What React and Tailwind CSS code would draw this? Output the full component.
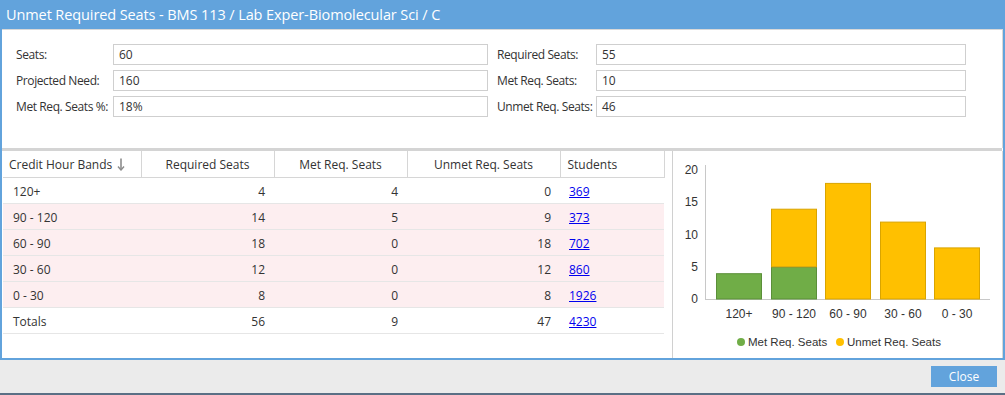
import React from 'react';

const fields = [
  [['Seats:', '60'], ['Required Seats:', '55']],
  [['Projected Need:', '160'], ['Met Req. Seats:', '10']],
  [['Met Req. Seats %:', '18%'], ['Unmet Req. Seats:', '46']],
];

const rows = [
  { band: '120+', req: 4, met: 4, unmet: 0, students: 369, warn: false },
  { band: '90 - 120', req: 14, met: 5, unmet: 9, students: 373, warn: true },
  { band: '60 - 90', req: 18, met: 0, unmet: 18, students: 702, warn: true },
  { band: '30 - 60', req: 12, met: 0, unmet: 12, students: 860, warn: true },
  { band: '0 - 30', req: 8, met: 0, unmet: 8, students: 1926, warn: true },
  { band: 'Totals', req: 56, met: 9, unmet: 47, students: 4230, warn: false },
];

// chart geometry
const base = 148;
const unit = 6.45;
const barX = [43, 98, 152, 207, 261];

function SortArrow() {
  return (
    <svg width="8" height="13" viewBox="0 0 8 13" className="inline-block ml-[5px] align-[-2px]">
      <path d="M4 0.5V11.5" stroke="#8c8c8c" strokeWidth="1.6" />
      <path d="M1 8.5L4 12L7 8.5" stroke="#8c8c8c" strokeWidth="1.4" fill="none" />
    </svg>
  );
}

function Chart() {
  const bars = rows.slice(0, 5);
  return (
    <svg width="328" height="207" className="block" style={{ fontFamily: '"Liberation Sans", Arial, sans-serif' }}>
      {[0, 5, 10, 15, 20].map(v => (
        <text key={v} x="25" y={base - v * unit + 4} fontSize="12" fill="#333" textAnchor="end">{v}</text>
      ))}
      <line x1="32.5" y1="14" x2="32.5" y2={base} stroke="#c8c8c8" />
      <line x1="32" y1={base + 0.5} x2="317" y2={base + 0.5} stroke="#c8c8c8" />
      {bars.map((r, i) => {
        const x = barX[i] + 0.5;
        const metTop = base - r.met * unit;
        const unTop = metTop - r.unmet * unit;
        return (
          <g key={r.band}>
            {r.met > 0 && (
              <rect x={x} y={metTop + 0.5} width="45" height={r.met * unit - 0.5} fill="#70ad47" stroke="#5b8f39" />
            )}
            {r.unmet > 0 && (
              <rect x={x} y={unTop + 0.5} width="45" height={r.unmet * unit - 0.5} fill="#ffc000" stroke="#d9a400" />
            )}
            <text x={barX[i] + 23} y="167" fontSize="12" fill="#333" textAnchor="middle">{r.band}</text>
          </g>
        );
      })}
      <circle cx="68" cy="191" r="4" fill="#70ad47" />
      <text x="75" y="195" fontSize="11.5" fill="#333">Met Req. Seats</text>
      <circle cx="167" cy="191" r="4" fill="#ffc000" />
      <text x="174" y="195" fontSize="11.5" fill="#333">Unmet Req. Seats</text>
    </svg>
  );
}

export default function App() {
  return (
    <div className="w-[1005px] h-[395px] bg-[#ebebeb] flex flex-col overflow-hidden text-[#333]" style={{ fontFamily: '"Open Sans", "Noto Sans", sans-serif' }}>
      {/* title */}
      <div className="h-[29px] bg-[#62a3dc] text-white text-[14.5px] leading-[29px] pl-[6px] shrink-0 tracking-[-0.1px]">
        Unmet Required Seats - BMS 113 / Lab Exper-Biomolecular Sci / C
      </div>

      {/* body */}
      <div className="h-[331px] border-x-2 border-b-2 border-[#62a3dc] bg-white flex flex-col shrink-0">
        <div className="h-[119px] border-t border-r border-[#d8d8d8] pt-[14px] pl-[14px] flex flex-col gap-[5px] text-[12px]">
          {fields.map((pair, i) => (
            <div key={i} className="flex h-[21px] items-center">
              <div className="w-[97px] whitespace-nowrap tracking-[-0.4px]">{pair[0][0]}</div>
              <div className="w-[375px] h-[21px] border border-[#cfcfcf] pl-[5px] leading-[19px]">{pair[0][1]}</div>
              <div className="w-[108px] pl-[9px] whitespace-nowrap tracking-[-0.4px]">{pair[1][0]}</div>
              <div className="w-[370px] h-[21px] border border-[#cfcfcf] pl-[5px] leading-[19px]">{pair[1][1]}</div>
            </div>
          ))}
        </div>
        <div className="h-[3px] bg-[#d4d4d4] mr-[1px]" />
        <div className="flex flex-1 text-[12px] border-r border-[#d8d8d8]">
          <div className="w-[670px] pl-[1px]">
            <table className="border-collapse table-fixed w-[661px]">
              <colgroup>
                <col className="w-[138px]" />
                <col className="w-[133px]" />
                <col className="w-[133px]" />
                <col className="w-[153px]" />
                <col className="w-[104px]" />
              </colgroup>
              <thead>
                <tr className="h-[26px]">
                  <th className="font-normal text-left pl-[6px] pt-[2px] border-r border-b border-[#d6d6d6]">
                    Credit Hour Bands<SortArrow />
                  </th>
                  <th className="font-normal text-center pt-[2px] border-r border-b border-[#d6d6d6]">Required Seats</th>
                  <th className="font-normal text-center pt-[2px] border-r border-b border-[#d6d6d6]">Met Req. Seats</th>
                  <th className="font-normal text-center pt-[2px] border-r border-b border-[#d6d6d6]">Unmet Req. Seats</th>
                  <th className="font-normal text-left pl-[7px] pt-[2px] border-r border-b border-[#d6d6d6]">Students</th>
                </tr>
              </thead>
              <tbody>
                {rows.map(r => (
                  <tr key={r.band} className={`h-[26px] border-b border-[#e6e6e6] ${r.warn ? 'bg-[#fdeef0]' : 'bg-white'}`}>
                    <td className="pl-[10px] pt-[3px]">{r.band}</td>
                    <td className="text-right pr-[9px] pt-[3px]">{r.req}</td>
                    <td className="text-right pr-[9px] pt-[3px]">{r.met}</td>
                    <td className="text-right pr-[9px] pt-[3px]">{r.unmet}</td>
                    <td className="pl-[9px] pt-[3px]">
                      <a href="#" className="text-[#0000ee] underline">{r.students}</a>
                    </td>
                  </tr>
                ))}
              </tbody>
            </table>
          </div>
          <div className="flex-1 border-l border-[#d0d0d0]">
            <Chart />
          </div>
        </div>
      </div>

      {/* footer */}
      <div className="flex-1 flex justify-end items-start pt-[6px] pr-[8px] border-b-2 border-[#5a6f85]">
        <button className="w-[66px] h-[21px] bg-[#62a3dc] text-white text-[12px]">Close</button>
      </div>
    </div>
  );
}
